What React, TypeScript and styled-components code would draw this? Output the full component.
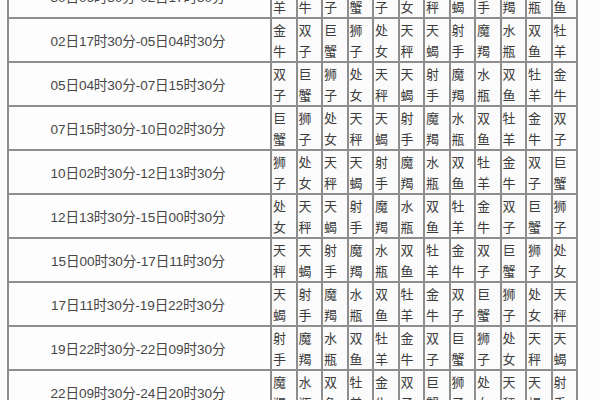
import React from 'react';
import styled, { createGlobalStyle } from 'styled-components';

const GlobalStyle = createGlobalStyle`
  html, body {
    margin: 0;
    padding: 0;
    background: #ffffff;
    overflow: hidden;
  }
  body {
    font-family: "Liberation Sans", "Noto Sans CJK SC", sans-serif;
  }
`;

const Page = styled.div`
  width: 600px;
  height: 400px;
  overflow: hidden;
  background: #fdfdfd;
  padding-left: 7px;
  box-sizing: border-box;
`;

const Table = styled.div`
  margin-top: -27px;
  display: grid;
  grid-template-columns: 261px repeat(12, 23.5px);
  grid-auto-rows: 42px;
  gap: 2px;
  padding: 2px;
  width: max-content;
  background: #8e8e8e;
`;

const TimeCell = styled.div`
  background: #fdfdfd;
  display: flex;
  align-items: center;
  justify-content: center;
  padding-right: 3px;
  font-size: 13.6px;
  color: #474747;
  white-space: nowrap;
  letter-spacing: -0.1px;
`;

const SignCell = styled.div`
  background: #fbfbfb;
  padding-left: 1px;
  font-family: "Noto Sans CJK SC", sans-serif;
  font-size: 13px;
  line-height: 21px;
  color: #3c3c3c;
  overflow: hidden;
`;

const SignChar = styled.span`
  display: block;
`;

const signs = [
  '牡羊', '金牛', '双子', '巨蟹', '狮子', '处女',
  '天秤', '天蝎', '射手', '魔羯', '水瓶', '双鱼',
];

const periods = [
  '30日06时30分-02日17时30分',
  '02日17时30分-05日04时30分',
  '05日04时30分-07日15时30分',
  '07日15时30分-10日02时30分',
  '10日02时30分-12日13时30分',
  '12日13时30分-15日00时30分',
  '15日00时30分-17日11时30分',
  '17日11时30分-19日22时30分',
  '19日22时30分-22日09时30分',
  '22日09时30分-24日20时30分',
];

const App: React.FC = () => {
  return (
    <>
      <GlobalStyle />
      <Page>
        <Table>
          {periods.map((period, row) => (
            <React.Fragment key={period}>
              <TimeCell>{period}</TimeCell>
              {signs.map((_, col) => {
                const sign = signs[(row + col) % signs.length];
                return (
                  <SignCell key={col}>
                    <SignChar>{sign[0]}</SignChar>
                    <SignChar>{sign[1]}</SignChar>
                  </SignCell>
                );
              })}
            </React.Fragment>
          ))}
        </Table>
      </Page>
    </>
  );
};

export default App;
